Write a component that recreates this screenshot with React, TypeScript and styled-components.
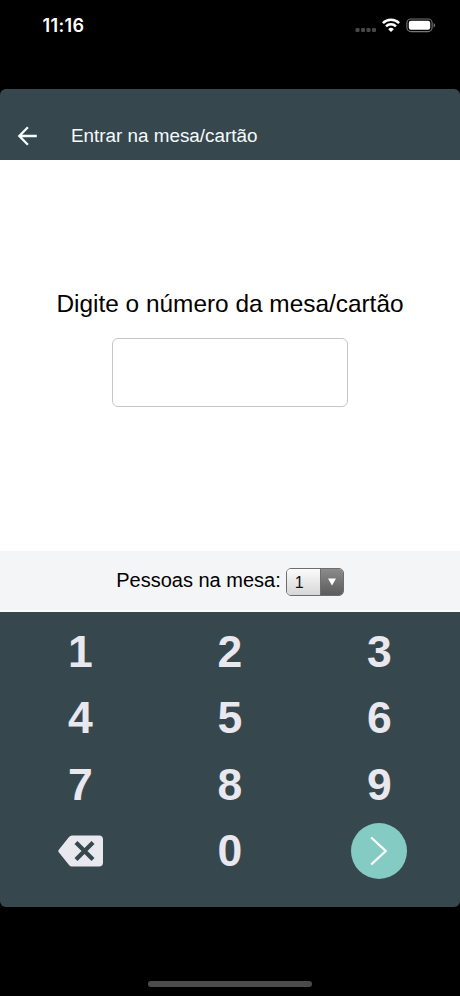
import React from "react";
import styled, { createGlobalStyle } from "styled-components";

const GlobalStyle = createGlobalStyle`
  * { box-sizing: border-box; }
  body { margin: 0; background: #000; }
  button { font: inherit; border: 0; padding: 0; background: none; color: inherit; }
`;

const Screen = styled.div`
  width: 460px;
  height: 996px;
  display: flex;
  flex-direction: column;
  background: #000;
  font-family: "Liberation Sans", Arial, sans-serif;
  overflow: hidden;
`;

const StatusBar = styled.div`
  height: 89px;
  flex: none;
  display: flex;
  justify-content: space-between;
  align-items: flex-start;
  padding: 14px 24px 0 42.5px;
  color: #fff;
`;

const Clock = styled.div`
  font-family: Inter, sans-serif;
  font-weight: 600;
  font-size: 18px;
  line-height: 24px;
  letter-spacing: 0.35px;
`;

const StatusIcons = styled.svg`
  display: block;
  width: 84px;
  height: 24px;
`;

const AppFrame = styled.main`
  height: 818px;
  flex: none;
  display: flex;
  flex-direction: column;
  border-radius: 6px;
  overflow: hidden;
  background: #37474e;
`;

const Header = styled.header`
  height: 71px;
  flex: none;
  display: flex;
  align-items: center;
  padding: 23px 0 0 17px;
  color: #f4fbfd;
`;

const BackButton = styled.button`
  display: flex;
  width: 54px;
`;

const Title = styled.h1`
  margin: 0;
  font-weight: 400;
  font-size: 18.85px;
  line-height: 24px;
`;

const EntryPanel = styled.section`
  height: 391px;
  flex: none;
  display: flex;
  flex-direction: column;
  align-items: center;
  padding-top: 129px;
  background: #fff;
`;

const Prompt = styled.label`
  font-size: 24.4px;
  line-height: 30px;
  white-space: nowrap;
  color: #000;
`;

const NumberInput = styled.input`
  width: 236px;
  height: 69px;
  margin-top: 19px;
  padding: 0 12px;
  border: 1px solid #c6c6c6;
  border-radius: 6px;
  background: #fff;
  font-size: 30px;
  text-align: center;
  outline: none;
`;

const PeopleBar = styled.section`
  height: 61px;
  flex: none;
  display: flex;
  justify-content: center;
  align-items: center;
  gap: 5px;
  background: #f3f5f7;
  border-bottom: 2px solid #fcfdfd;
  color: #000;
`;

const PeopleLabel = styled.span`
  font-size: 20px;
  line-height: 24px;
  padding-bottom: 1px;
`;

const Picker = styled.button`
  width: 58px;
  height: 28px;
  margin-top: 3px;
  display: flex;
  border: 1px solid #6d6d6d;
  border-radius: 5px;
  overflow: hidden;
`;

const PickerValue = styled.span`
  flex: 1;
  padding-left: 8px;
  font-size: 16px;
  line-height: 27px;
  text-align: left;
  color: #111;
  background: linear-gradient(#fbfbfb, #d6d6d6);
`;

const PickerArrow = styled.span`
  width: 23px;
  display: flex;
  align-items: center;
  justify-content: center;
  padding-bottom: 1px;
  border-left: 1px solid #6d6d6d;
  background: linear-gradient(#8b8b8b, #5c5c5c);
`;

const Keypad = styled.section`
  flex: 1;
  display: grid;
  grid-template-columns: repeat(3, 149.5px);
  grid-auto-rows: 66.5px;
  padding: 6.5px 0 0 5.5px;
  color: #e8e8ee;
`;

const Key = styled.button`
  display: flex;
  align-items: center;
  justify-content: center;
  font-weight: 700;
  font-size: 44.5px;
  line-height: 50px;
`;

const ConfirmDisc = styled.span`
  width: 56px;
  height: 56px;
  border-radius: 50%;
  display: flex;
  align-items: center;
  justify-content: center;
  background: #84cbc3;
`;

const HomeArea = styled.div`
  flex: 1;
  display: flex;
  justify-content: center;
  align-items: flex-end;
  padding-bottom: 9px;
`;

const HomeIndicator = styled.div`
  width: 164px;
  height: 6px;
  border-radius: 3px;
  background: #4b4b4b;
`;

const digits = ["1", "2", "3", "4", "5", "6", "7", "8", "9"];

export default function App() {
  return (
    <>
      <GlobalStyle />
      <Screen>
        <StatusBar>
          <Clock>11:16</Clock>
          <StatusIcons viewBox="0 0 84 24">
            <g fill="#484848">
              <rect x="3.5" y="14" width="4" height="4" rx="1.3" />
              <rect x="9" y="14" width="4" height="4" rx="1.3" />
              <rect x="14.5" y="14" width="4" height="4" rx="1.3" />
              <rect x="20" y="14" width="4" height="4" rx="1.3" />
            </g>
            <g fill="none" stroke="#fff" strokeWidth="2.5">
              <path d="M30.9 9.1a11.5 11.5 0 0 1 16.2 0" />
              <path d="M34 12.4a7.1 7.1 0 0 1 10 0" />
            </g>
            <path d="M39 18l-2.8-2.8a4 4 0 0 1 5.6 0z" fill="#fff" />
            <rect x="54.9" y="5" width="25.2" height="12.6" rx="4" fill="none" stroke="#777" strokeWidth="1.1" />
            <rect x="56.8" y="6.8" width="21.4" height="9" rx="2.2" fill="#fff" />
            <path d="M81.6 9v4.6q1.5-.7 1.5-2.3t-1.5-2.3z" fill="#777" />
          </StatusIcons>
        </StatusBar>
        <AppFrame>
          <Header>
            <BackButton aria-label="Voltar">
              <svg width="20" height="20" viewBox="0 0 20 20" fill="none" stroke="currentColor" strokeWidth="2.3">
                <path d="M10.9 1.2 2.3 10l8.6 8.8M2.3 10H19.8" />
              </svg>
            </BackButton>
            <Title>Entrar na mesa/cartão</Title>
          </Header>
          <EntryPanel>
            <Prompt htmlFor="table-number">Digite o número da mesa/cartão</Prompt>
            <NumberInput id="table-number" readOnly />
          </EntryPanel>
          <PeopleBar>
            <PeopleLabel>Pessoas na mesa:</PeopleLabel>
            <Picker>
              <PickerValue>1</PickerValue>
              <PickerArrow>
                <svg width="8" height="8" viewBox="0 0 8 8">
                  <path d="M0 .5h8L4 7.5z" fill="#fff" />
                </svg>
              </PickerArrow>
            </Picker>
          </PeopleBar>
          <Keypad>
            {digits.map((digit) => (
              <Key key={digit}>{digit}</Key>
            ))}
            <Key aria-label="Apagar">
              <svg width="45" height="32" viewBox="0 0 45 32">
                <path
                  d="M14 .5H41Q45 .5 45 4.5V27.5Q45 31.5 41 31.5H14Q12.2 31.5 11 30L.8 17.3Q-.2 16 .8 14.7L11 2Q12.2.5 14 .5Z"
                  fill="currentColor"
                />
                <path d="m18 7.5 17 17m0-17-17 17" stroke="#37474e" strokeWidth="4.2" fill="none" />
              </svg>
            </Key>
            <Key>0</Key>
            <Key aria-label="Confirmar">
              <ConfirmDisc>
                <svg width="18" height="30" viewBox="0 0 18 30" fill="none" stroke="#fff" strokeWidth="2.3">
                  <path d="M1.2 1.5 15.7 15 1.2 28.5" />
                </svg>
              </ConfirmDisc>
            </Key>
          </Keypad>
        </AppFrame>
        <HomeArea>
          <HomeIndicator />
        </HomeArea>
      </Screen>
    </>
  );
}
